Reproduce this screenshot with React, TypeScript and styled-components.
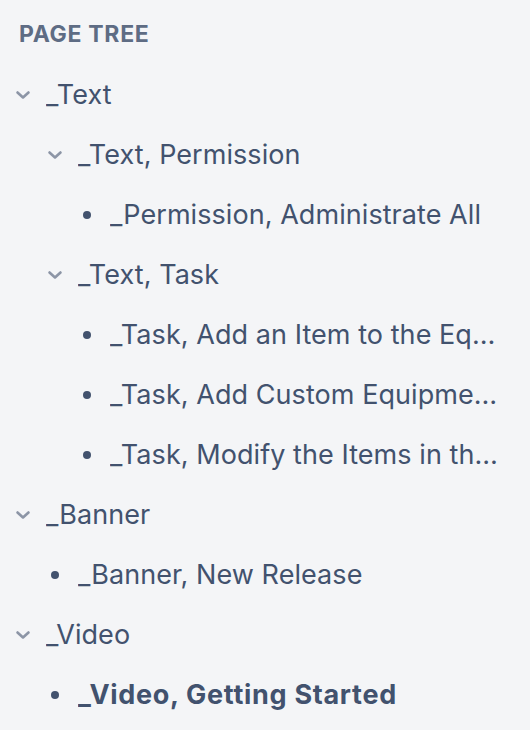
import React from 'react';
import styled, { createGlobalStyle } from 'styled-components';

type Node = {
  title: string;
  current?: boolean;
  children?: Node[];
};

const tree: Node[] = [
  {
    title: '_Text',
    children: [
      {
        title: '_Text, Permission',
        children: [{ title: '_Permission, Administrate All' }],
      },
      {
        title: '_Text, Task',
        children: [
          { title: '_Task, Add an Item to the Equipment List' },
          { title: '_Task, Add Custom Equipment' },
          { title: '_Task, Modify the Items in the Equipment List' },
        ],
      },
    ],
  },
  {
    title: '_Banner',
    children: [{ title: '_Banner, New Release' }],
  },
  {
    title: '_Video',
    children: [{ title: '_Video, Getting Started', current: true }],
  },
];

const GlobalStyle = createGlobalStyle`
  html, body {
    margin: 0;
    padding: 0;
    background: #f4f5f7;
  }
  body {
    font-family: Inter, "Noto Sans", "Liberation Sans", sans-serif;
    color: #42526e;
  }
`;

const Chevron = () => (
  <svg width="16" height="10" viewBox="0 0 16 10" aria-hidden>
    <path
      d="M2.5 2.5 L8 7.5 L13.5 2.5"
      fill="none"
      stroke="#8c95a6"
      strokeWidth="2.6"
      strokeLinecap="round"
      strokeLinejoin="round"
    />
  </svg>
);

const TreeRows = ({ nodes, level }: { nodes: Node[]; level: number }) => (
  <>
    {nodes.map((n, idx) => (
      <React.Fragment key={`${level}-${idx}`}>
        <Row level={level}>
          <Marker>{n.children ? <Chevron /> : <Bullet />}</Marker>
          <Label $current={!!n.current}>{n.title}</Label>
        </Row>
        {n.children && <TreeRows nodes={n.children} level={level + 1} />}
      </React.Fragment>
    ))}
  </>
);

const App = () => (
  <Sidebar>
    <GlobalStyle />
    <Heading>Page tree</Heading>
    <List>
      <TreeRows nodes={tree} level={0} />
    </List>
  </Sidebar>
);

const Sidebar = styled.nav`
  width: 530px;
  height: 730px;
  box-sizing: border-box;
  padding: 18px 32px 0 8px;
  overflow: hidden;
`;

const Heading = styled.h2`
  margin: 0 0 0 11px;
  font-size: 23px;
  line-height: 32px;
  font-weight: 700;
  letter-spacing: 0.03em;
  text-transform: uppercase;
  color: #5e6c84;
`;

const List = styled.div`
  display: flex;
  flex-direction: column;
  margin-top: 15px;
`;

const Row = styled.div<{ level: number }>`
  display: flex;
  align-items: center;
  height: 60px;
  padding-left: ${({ level }) => level * 32}px;
  min-width: 0;
`;

const Marker = styled.span`
  flex: 0 0 30px;
  display: flex;
  align-items: center;
  justify-content: center;
  margin-right: 8px;
`;

const Bullet = styled.span`
  width: 8px;
  height: 8px;
  border-radius: 50%;
  background: #42526e;
`;

const Label = styled.span<{ $current: boolean }>`
  flex: 1 1 auto;
  min-width: 0;
  font-size: 27px;
  line-height: 32px;
  font-weight: ${({ $current }) => ($current ? 700 : 400)};
  letter-spacing: ${({ $current }) => ($current ? '0.7px' : '0.06px')};
  white-space: nowrap;
  overflow: hidden;
  text-overflow: ellipsis;
`;

export default App;
